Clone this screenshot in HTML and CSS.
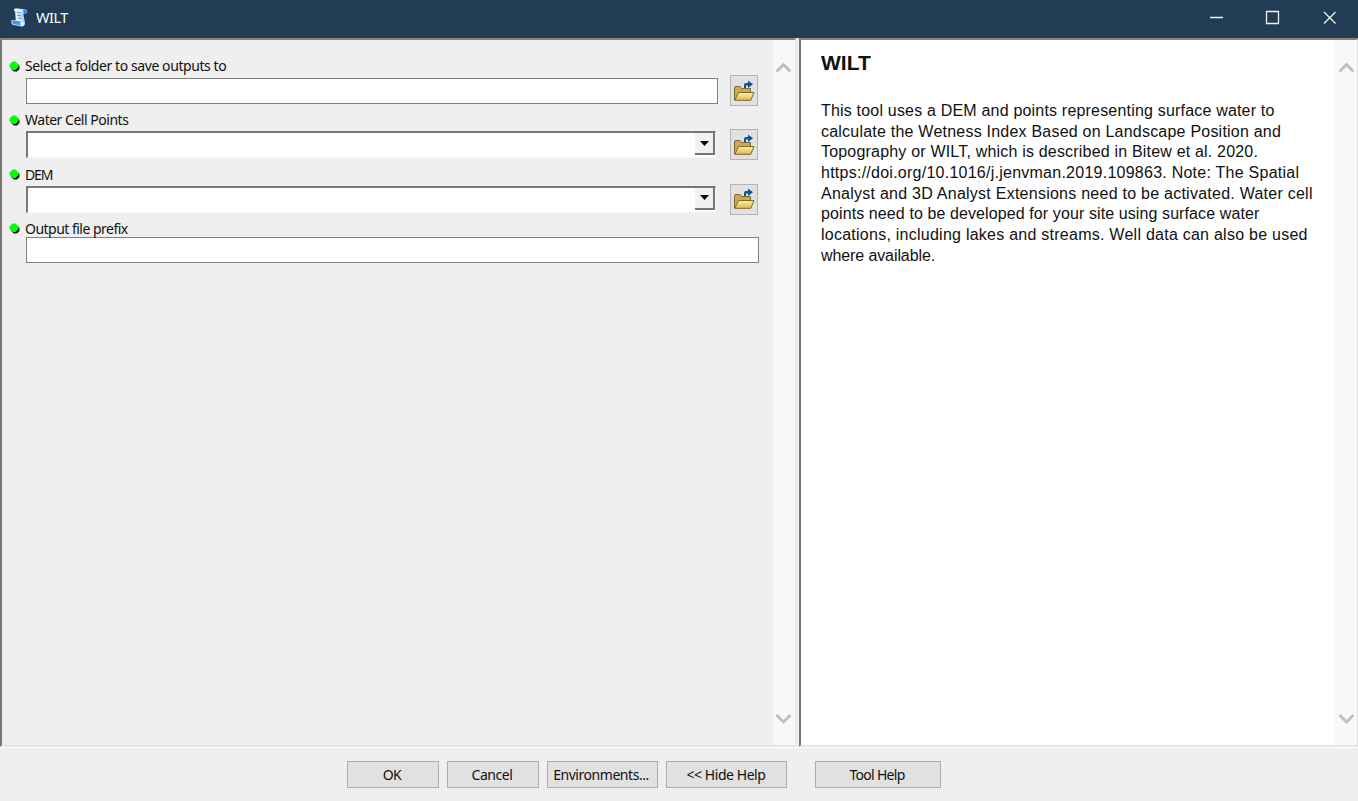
FILE: index.html
```html
<!DOCTYPE html>
<html lang="en">
<head>
<meta charset="utf-8">
<title>WILT</title>
<link rel="stylesheet" href="styles.css">
</head>
<body>
<svg class="defs" width="0" height="0">
  <defs>
    <linearGradient id="gold" x1="0" y1="0" x2="0" y2="1"><stop offset="0" stop-color="#fff0a0"/><stop offset="1" stop-color="#dfb951"/></linearGradient>
    <linearGradient id="paper" x1="0" y1="0" x2="1" y2="0"><stop offset="0" stop-color="#fff"/><stop offset=".6" stop-color="#d5ecff"/><stop offset="1" stop-color="#6eb2f0"/></linearGradient>
    <symbol id="folder" viewBox="0 0 22 22">
      <path d="M1.500 20V8Q1.500 6.500 3 6.500H7L8.500 8.500H17.500V12" fill="#c9a957" stroke="#80672b"/>
      <path d="M1.800 20.300L5.500 12.500H21L17.800 20.300z" fill="url(#gold)" stroke="#80672b"/>
      <path d="M11 8V5Q11 3 13 3H15V.5L20 4.200L15 8V5.500H13V8z" fill="#0c5795"/>
    </symbol>
    <symbol id="up" viewBox="0 0 15 12"><path d="M.5 10.500L7.500 3.500L14.500 10.500" fill="none" stroke="#c0c0c0" stroke-width="3"/></symbol>
    <symbol id="down" viewBox="0 0 15 12"><path d="M.5 2L7.500 9L14.500 2" fill="none" stroke="#c0c0c0" stroke-width="3"/></symbol>
    <symbol id="dot" viewBox="0 0 11 11"><path d="M4 3h4l2.500 2v3L8 10.500H5L2 8z" fill="#111"/><path d="M3.500 .5h3L9.500 3.500v2.500l-3 3h-3L.5 6V3.500z" fill="#0f0"/></symbol>
  </defs>
</svg>
<div class="window">
  <header class="titlebar">
    <svg class="app-icon" viewBox="0 0 20 21">
      <path d="M4 2Q6 0 8 1L17 2Q19 3 17.500 6L14 6.500L16 17Q15 20 12 20L3 18Q0 16 2 13L6 13L5.500 5z" fill="url(#paper)"/>
      <path d="M14 2.500Q17 1 17.500 4Q17 7 14.500 6z" fill="#2f83da"/>
      <path d="M1.500 14Q1 16.500 4 17.500L11 19Q10 16 12 15L5 13.500z" fill="#4697e5"/>
      <path d="M12 15.500Q15 15 15 17.500Q13 20 12 18z" fill="#e8f6ff"/>
      <path d="M7 5l5 1M7.500 8l5 1M8 11l5 1" stroke="#6f9bc9" stroke-width="1.200"/>
    </svg>
    <span class="title">WILT</span>
    <svg class="controls" viewBox="0 0 130 16"><path d="M1 8.500h13M57.500 2.500h12v12h-12zM115 3l11.500 11.500M126.500 3L115 14.500" fill="none" stroke="#eef1f4" stroke-width="1.300"/></svg>
  </header>
  <main class="panes">
    <section class="pane form-pane">
      <div class="form">
        <div class="field">
          <div class="label"><svg class="dot"><use href="#dot"/></svg><span class="t1">Select a folder to save outputs to</span></div>
          <div class="row"><div class="input"></div><div class="browse"><svg><use href="#folder"/></svg></div></div>
        </div>
        <div class="field">
          <div class="label"><svg class="dot"><use href="#dot"/></svg><span class="t2">Water Cell Points</span></div>
          <div class="row"><div class="combo"><div class="drop"><svg viewBox="0 0 9 5"><path d="M0 0h9L4.500 5z"/></svg></div></div><div class="browse"><svg><use href="#folder"/></svg></div></div>
        </div>
        <div class="field">
          <div class="label"><svg class="dot"><use href="#dot"/></svg><span class="t3">DEM</span></div>
          <div class="row"><div class="combo"><div class="drop"><svg viewBox="0 0 9 5"><path d="M0 0h9L4.500 5z"/></svg></div></div><div class="browse"><svg><use href="#folder"/></svg></div></div>
        </div>
        <div class="field">
          <div class="label"><svg class="dot"><use href="#dot"/></svg><span class="t4">Output file prefix</span></div>
          <div class="input wide"></div>
        </div>
      </div>
      <div class="scroll"><svg><use href="#up"/></svg><svg><use href="#down"/></svg></div>
    </section>
    <section class="pane help-pane">
      <article class="help">
        <h1>WILT</h1>
        <p><span class="snug">This tool uses a DEM and points representing surface water to</span><br><span class="even">calculate the Wetness Index Based on Landscape Position and</span><br><span class="snug">Topography or WILT, which is described in Bitew et al. 2020.</span><br>https://doi.org/10.1016/j.jenvman.2019.109863. Note: The Spatial<br>Analyst and 3D Analyst Extensions need to be activated. Water cell<br><span class="tight">points need to be developed for your site using surface water</span><br>locations, including lakes and streams. Well data can also be used<br><span class="tightest">where available.</span></p>
      </article>
      <div class="scroll"><svg><use href="#up"/></svg><svg><use href="#down"/></svg></div>
    </section>
  </main>
  <footer class="buttons">
    <div class="btn ok">OK</div>
    <div class="btn cancel">Cancel</div>
    <div class="btn env">Environments...</div>
    <div class="btn hide">&lt;&lt; Hide Help</div>
    <div class="btn tool">Tool Help</div>
  </footer>
</div>
</body>
</html>
```
FILE: styles.css
```css
* { box-sizing: border-box; }
body { margin: 0; background: #efefef; color: #111; font: 14px/18px "Noto Sans", sans-serif; overflow: hidden; }
svg { display: block; flex: none; }
.defs { position: absolute; }
.window { width: 1358px; height: 801px; display: flex; flex-direction: column; }
.titlebar { height: 38px; flex: none; background: #213c54; color: #fff; display: flex; align-items: flex-start; padding: 7px 20px 0 10px; }
.app-icon { width: 19px; height: 21px; }
.title { margin: 1px 0 0 7px; font-size: 14.5px; letter-spacing: -.5px; }
.controls { width: 130px; height: 16px; margin: 2px -1px 0 auto; }
.panes { height: 710px; flex: none; display: flex; gap: 3px; border-bottom: 1px solid #fff; }
.pane { display: flex; border: solid; border-width: 2px 1px 2px 2px; border-color: #858585 #e2e2e2 #e5e5e5 #777; }
.form-pane { width: 796px; background: #efefef; }
.help-pane { width: 559px; background: #fff; }
.scroll { width: 22px; flex: none; background: #f8f8f8; display: flex; flex-direction: column; justify-content: space-between; align-items: center; padding: 21px 0 20px; }
.form-pane .scroll { padding-right: 2px; }
.scroll svg { width: 15px; height: 12px; }
.form { flex: 1; padding: 17px 0 0 7px; }
.field { height: 54.3px; }
.label { height: 18px; display: flex; align-items: center; gap: 5px; white-space: nowrap; }
.t1 { letter-spacing: -.42px; }
.t2 { letter-spacing: -.48px; }
.t3 { letter-spacing: -1.1px; }
.t4 { letter-spacing: -.52px; }
.dot { width: 11px; height: 11px; }
.row { height: 31px; display: flex; align-items: center; gap: 12px; margin-left: 17px; }
.input { width: 692px; height: 26px; background: #fff; border: 1px solid #808080; }
.wide { width: 733px; height: 26px; margin: -1px 0 0 17px; }
.combo { width: 690px; height: 27px; margin-right: 2px; background: #fff; border: solid; border-width: 2px 1px 1px 2px; border-color: #777 #f6f6f6 #f6f6f6 #777; display: flex; justify-content: flex-end; }
.drop { width: 20px; height: 22px; background: #f1f1f1; border-right: 2px solid #777; border-bottom: 2px solid #777; display: grid; place-items: center; }
.drop svg { width: 9px; height: 5px; }
.browse { width: 28px; height: 31px; background: #e1e1e1; border: 1px solid #b4b4b4; display: grid; place-items: center; }
.browse svg { width: 22px; height: 22px; }
.help { flex: 1; padding: 10px 0 0 20px; font-family: "Liberation Sans", Arial, sans-serif; white-space: nowrap; }
.help h1 { margin: 0; font-size: 21px; line-height: 26px; font-weight: bold; }
.help p { margin: 25px 0 0; font-size: 16px; line-height: 20.67px; letter-spacing: .25px; }
.snug { letter-spacing: .19px; }
.even { letter-spacing: .22px; }
.tight { letter-spacing: .1px; }
.tightest { letter-spacing: -.1px; }
.buttons { height: 53px; display: flex; padding: 13px 0 0 347px; }
.btn { height: 27px; background: #e1e1e1; border: 1px solid #adadad; display: flex; align-items: center; justify-content: center; white-space: nowrap; letter-spacing: -.45px; }
.ok { width: 92px; padding-right: 2px; }
.cancel { width: 92px; margin-left: 8px; padding-right: 2px; }
.env { width: 111px; margin-left: 8px; padding-right: 3px; }
.hide { width: 121px; margin-left: 8px; padding-right: 1px; }
.tool { width: 126px; margin-left: 28px; padding-right: 2px; letter-spacing: -.7px; }
```
